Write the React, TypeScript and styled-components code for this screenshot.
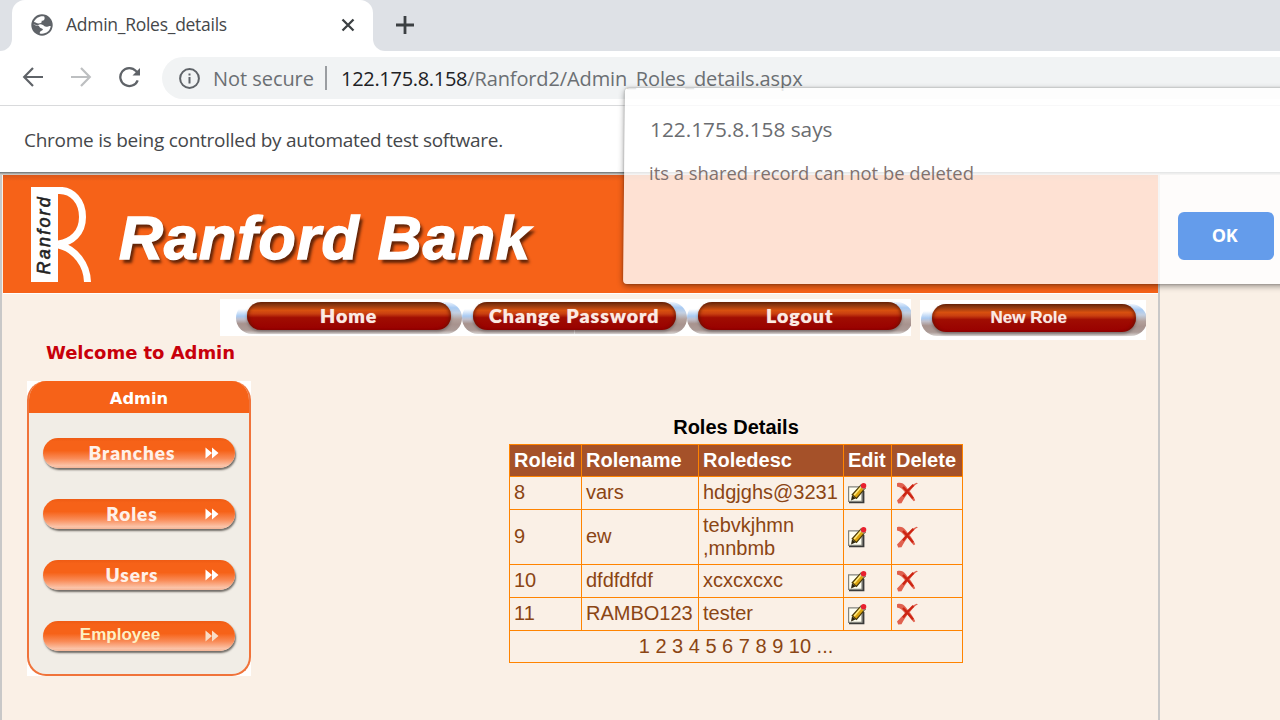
import React from "react";
import styled, { createGlobalStyle } from "styled-components";

const Global = createGlobalStyle`
  * { box-sizing: border-box; }
  html, body { margin: 0; padding: 0; height: 720px; overflow: hidden; background: #faf0e6; }
`;

const ui = `"Open Sans", "Noto Sans", sans-serif`;
const arial = `"Liberation Sans", Arial, sans-serif`;

const Window = styled.div`
  position: relative;
  width: 1280px;
  height: 720px;
  overflow: hidden;
  display: flex;
  flex-direction: column;
  background: #faf0e6;
  font-family: ${ui};
`;

const Text = styled.span<{ $size: number; $track?: number; $color?: string }>`
  font-family: ${ui};
  font-size: ${(p) => p.$size}px;
  letter-spacing: ${(p) => p.$track ?? 0}px;
  color: ${(p) => p.$color ?? "#45474a"};
  white-space: nowrap;
`;

/* browser frame */
const TabStrip = styled.div`
  height: 51px;
  flex: none;
  display: flex;
  background: #dee1e6;
`;
const TabFoot = styled.div<{ $side: "left" | "right" }>`
  width: ${(p) => (p.$side === "left" ? 12 : 14)}px;
  background: #fff;
  &::after {
    content: "";
    display: block;
    height: 51px;
    background: #dee1e6;
    border-radius: ${(p) => (p.$side === "left" ? "0 0 12px 0" : "0 0 0 12px")};
  }
`;
const Tab = styled.div`
  width: 361px;
  height: 51px;
  display: flex;
  align-items: center;
  padding: 0 18px 1px 19px;
  background: #fff;
  border-radius: 13px 13px 0 0;
`;
const TabTitle = styled.div`
  flex: 1;
  padding-left: 13px;
  line-height: 22px;
  padding-bottom: 2px;
`;
const NewTab = styled.div`
  padding: 15px 0 0 8px;
  svg { display: block; }
`;
const Toolbar = styled.div`
  height: 55px;
  flex: none;
  display: flex;
  align-items: flex-start;
  background: #fff;
  border-bottom: 1px solid #d9dadc;
  padding: 6px 0 0 22px;
`;
const NavIcons = styled.div`
  display: flex;
  gap: 26px;
  padding-top: 9px;
  width: 140px;
  svg { display: block; flex: none; }
`;
const Omnibox = styled.div`
  flex: 1;
  height: 42px;
  display: flex;
  align-items: center;
  background: #f1f3f4;
  border-radius: 21px 0 0 21px;
  padding-left: 17px;
`;
const NotSecure = styled.div`
  width: 113px;
  padding-left: 13px;
  white-space: nowrap;
`;
const Divider = styled.div`
  width: 2px;
  height: 24px;
  margin: 0 14px 1px 12px;
  background: #9a9da1;
`;
const InfoBar = styled.div`
  height: 66px;
  flex: none;
  display: flex;
  align-items: center;
  padding: 2px 0 0 24px;
  background: #fff;
`;

/* web page */
const Page = styled.div`
  flex: 1;
  width: 1160px;
  display: flex;
  flex-direction: column;
  border: 2px solid #c8c8c8;
  border-top: 0;
  border-bottom: 0;
`;
const PageShade = styled.div`
  flex: none;
  height: 3px;
  width: 1280px;
  background: linear-gradient(#7d8182 0 1px, #a5a5a2 1px 2px, #c9c4bf 2px 3px);
`;
const Banner = styled.div`
  flex: none;
  height: 119px;
  margin-left: 1px;
  display: flex;
  align-items: flex-start;
  padding: 12px 0 0 28px;
  background: linear-gradient(#d9571a 0, #f66218 6px, #f66218 100%);
  border-bottom: 1px solid #fff;
`;
const Logo = styled.div`
  width: 64px;
  height: 95px;
  display: flex;
`;
const LogoWord = styled.div`
  width: 27px;
  height: 95px;
  background: #fff;
  display: flex;
  align-items: center;
  justify-content: center;
  span {
    writing-mode: vertical-rl;
    transform: rotate(180deg);
    font: italic 400 18px/27px ${arial};
    letter-spacing: 2.2px;
    -webkit-text-stroke: 0.6px #222;
    color: #222;
  }
`;
const BankName = styled.div`
  margin: 16px 0 0 24px;
  font: italic 700 61px/70px ${arial};
  letter-spacing: 1px;
  color: #fff;
  -webkit-text-stroke: 1.5px #fff;
  text-shadow: 3px 4px 3px rgba(70, 25, 5, 0.85);
  white-space: nowrap;
`;

const MenuRow = styled.div`
  flex: none;
  display: flex;
  align-items: flex-start;
  gap: 9px;
  padding: 5px 0 0 218px;
  height: 47px;
`;
const MenuStrip = styled.div<{ $alone?: boolean }>`
  display: flex;
  width: ${(p) => (p.$alone ? 226 : 691)}px;
  height: ${(p) => (p.$alone ? 40 : 37)}px;
  margin-top: ${(p) => (p.$alone ? 1 : 0)}px;
  padding: ${(p) => (p.$alone ? "4px 0 0 1px" : "3px 0 0 16px")};
  background: #fff;
  overflow: hidden;
`;
const MenuShell = styled.div`
  flex: none;
  width: 225.5px;
  height: 32px;
  padding: 0 11px;
  border-radius: 16px;
  background:
    linear-gradient(#fff 0, #fff 22%, #a9cbf3 44%, #c0c0cc 54%, #a8938e 68%, #ab9b97 88%, #dcd8d6 100%) left / 50% 100% no-repeat,
    linear-gradient(#eef4fd 0, #a9cbf3 18%, #c3d0e2 34%, #b3a19c 54%, #a8938e 70%, #ab9b97 88%, #dcd8d6 100%) right / 50% 100% no-repeat;
`;
const MenuPill = styled.div<{ $size: number; $track: number; $sans?: boolean }>`
  height: 28px;
  border-radius: 14px;
  padding-right: ${(p) => (p.$sans ? 10 : 0)}px;
  background: linear-gradient(#6b2508 0, #8f3810 12%, #d8500f 30%, #c93f10 42%, #a00d02 56%, #980000 100%);
  box-shadow: inset 3px 0 3px -1px rgba(90, 20, 0, 0.55), inset -3px 0 3px -1px rgba(90, 20, 0, 0.55), 0 2px 3px rgba(90, 80, 80, 0.6);
  text-align: center;
  font-family: ${(p) => (p.$sans ? arial : `Lato, ${arial}`)};
  font-weight: ${(p) => (p.$sans ? 700 : 800)};
  font-size: ${(p) => p.$size}px;
  line-height: 28px;
  letter-spacing: ${(p) => p.$track}px;
  color: #fbeae4;
  white-space: nowrap;
  text-shadow: 0 0 1px rgba(255, 255, 255, 0.5);
`;

const Columns = styled.div`
  flex: 1;
  display: flex;
`;
const Side = styled.div`
  width: 507px;
  padding-left: 25px;
`;
const Welcome = styled.div`
  padding-left: 19px;
  height: 40px;
  font: 700 18px/24px "DejaVu Sans", sans-serif;
  letter-spacing: -0.04px;
  color: #c8000b;
  white-space: nowrap;
`;
const SideBox = styled.div`
  width: 224px;
  height: 295px;
  background: #fff;
`;
const SidePanel = styled.div`
  height: 295px;
  border-radius: 19px;
  border: 2px solid #f0733a;
  border-top: 0;
  background: #f1ede6;
  overflow: hidden;
`;
const SideTitle = styled.div`
  margin: 0 -2px 25px;
  height: 32px;
  background: #f66218;
  color: #fff;
  text-align: center;
  font: 700 16.3px/35px "DejaVu Sans", sans-serif;
`;
const SideButton = styled.div<{ $plain?: boolean }>`
  width: 192px;
  height: 30px;
  margin: 0 0 31px 14px;
  padding-right: 16px;
  display: flex;
  align-items: center;
  border-radius: 15px;
  background: linear-gradient(#ee5b14 0, #f66218 12%, #f66218 42%, #f98b57 68%, #fbc3a8 92%, #f3b496 100%);
  box-shadow: 1px 2px 2px rgba(80, 75, 70, 0.8);
  span {
    flex: 1;
    text-align: center;
    padding-left: ${(p) => (p.$plain ? 0 : 16)}px;
    padding-right: ${(p) => (p.$plain ? 8 : 0)}px;
    font: ${(p) => (p.$plain ? `700 17px/26px ${arial}` : `800 19px/28px Lato, ${arial}`)};
    padding-bottom: ${(p) => (p.$plain ? 3 : 1)}px;
    letter-spacing: ${(p) => (p.$plain ? 0 : 0.95)}px;
    color: ${(p) => (p.$plain ? "#fdf0c4" : "#fff0e8")};
  }
`;

const Roles = styled.div`
  width: 454px;
  padding-top: 75px;
`;
const Caption = styled.div`
  height: 28px;
  text-align: center;
  font: 700 20px/23px ${arial};
  color: #000;
`;
const Table = styled.table`
  width: 454px;
  table-layout: fixed;
  border-collapse: collapse;
  font: 20px/23px ${arial};
  color: #8b4513;
`;
const Row = styled.tr<{ $h: number }>`
  height: ${(p) => p.$h}px;
`;
const Cell = styled.td<{ $low?: boolean }>`
  border: 1px solid #ff8400;
  padding: 0 0 ${(p) => (p.$low ? 0 : 2)}px 4px;
  white-space: nowrap;
  vertical-align: middle;
  svg { display: block; }
`;
const Head = styled(Cell).attrs({ as: "th" })`
  background: #a55129;
  color: #fff;
  text-align: left;
  padding-bottom: 0;
`;
const Pager = styled(Cell)`
  text-align: center;
  padding: 0;
`;

/* alert floating above the page */
const Alert = styled.div`
  position: absolute;
  left: 624px;
  top: 88px;
  width: 670px;
  height: 196px;
  padding: 28px 20px 0 26px;
  display: flex;
  flex-direction: column;
  &::before {
    content: "";
    position: absolute;
    inset: 0;
    z-index: -1;
    border-radius: 4px;
    transform: skewX(-0.55deg);
    background: rgba(255, 255, 255, 0.81);
    box-shadow: 0 2px 6px rgba(0, 0, 0, 0.42), 0 0 2px rgba(0, 0, 0, 0.3);
  }
  z-index: 1;
`;
const AlertTitle = styled.div`
  height: 43px;
  line-height: 27px;
`;
const AlertMessage = styled.div`
  height: 53px;
  margin-left: -1px;
  line-height: 27px;
`;
const OkButton = styled.div`
  align-self: flex-end;
  width: 96px;
  height: 48px;
  border-radius: 6px;
  background: #649ceb;
  color: #fff;
  text-align: center;
  font: 700 18px/47px ${ui};
  letter-spacing: -0.5px;
  padding-right: 3px;
`;

const Globe = () => (
  <svg width="22" height="22" viewBox="0 0 22 22">
    <circle cx="11" cy="11" r="10.7" fill="#5f6368" />
    <path d="M13.200 2.400C9 1.500 4.500 4 2.900 8 4.500 8.300 5.500 9.500 7.300 9.600 10 9.600 11.200 8.600 10.600 6.800 13.500 6.500 14.200 4.500 13.200 2.400zM2.200 10.500C4.500 10.800 8 11 8.500 13 9 14.500 11.500 14 12 15.500 11 17 8.500 17 8.800 19.400 14 20.700 19.400 17.200 19.700 12 17 12 15.500 13.500 13.500 12.300 12.500 11.300 11.500 10.200 9 10.300L6 11.500C4.500 11.500 3 10.800 2.200 10.500z" fill="#fff" />
  </svg>
);
const Chevrons = ({ color }: { color: string }) => (
  <svg width="14" height="12" viewBox="0 0 14 12">
    <path d="M0.500 0.500 7 6l-6.500 5.500zM7 0.500 13.500 6 7 11.500z" fill={color} />
  </svg>
);
const EditIcon = () => (
  <svg width="20" height="21" viewBox="0 0 20 21">
    <path d="M15.300 8v11.200H1" fill="none" stroke="#3a3a3a" strokeWidth="2.200" />
    <path d="M0.600 3.800h13.400v14.500H0.600z" fill="#fffff2" stroke="#82837c" strokeWidth="1.200" />
    <path d="M3 17.500 4 12.500 8 15.200z" fill="#2b230d" />
    <path d="M13 2 17 5.300 8.500 15.400 4.200 11.800z" fill="#dba40f" stroke="#4a3a0a" strokeWidth="1.200" />
    <path d="M13.200 3.800 6.200 12" stroke="#ffec84" strokeWidth="1.400" />
    <path d="m12.300 2.800 4.400 3.600" stroke="#a9aaa4" strokeWidth="1.600" />
    <circle cx="15.600" cy="2.700" r="2.700" fill="#e8202e" />
  </svg>
);
const DeleteIcon = () => (
  <svg width="23" height="22" viewBox="0 0 23 22">
    <path d="M1 1.200C4 .2 7.500.8 9.800 4.300L12 7.200C14.500 4.500 17 2 20.500.8l1.500.4C18.500 3 16 6 13.800 9.200c1.800 2.800 4 5.600 5.400 9l-1.400 1C15.500 17 13.500 14 11.500 11.800 9.500 14.500 7.500 17.500 5.500 21.200L2.200 21.600 1 18.500c2.500-3 5.500-5.500 8-8.300C6.800 7.200 4.500 5.200 1 4.500z" fill="#e0614f" />
    <path d="M7 5l4 4.200C14 6.500 15.500 4.500 17.500 3M11 9.200l6 7.200M11 9.500 7 14.500" fill="none" stroke="#cc2412" strokeWidth="2.200" />
  </svg>
);

const records = [
  { id: "8", name: "vars", desc: ["hdgjghs@3231"], h: 33 },
  { id: "9", name: "ew", desc: ["tebvkjhmn", ",mnbmb"], h: 55 },
  { id: "10", name: "dfdfdfdf", desc: ["xcxcxcxc"], h: 33 },
  { id: "11", name: "RAMBO123", desc: ["tester"], h: 33 },
];

export default function App() {
  return (
    <Window>
      <Global />
      <TabStrip>
        <TabFoot $side="left" />
        <Tab>
          <Globe />
          <TabTitle><Text $size={17.5} $track={-0.27}>Admin_Roles_details</Text></TabTitle>
          <svg width="14" height="14" viewBox="0 0 14 14">
            <path d="M1.500 1.500l11 11M12.500 1.500l-11 11" stroke="#3c4043" strokeWidth="2.300" />
          </svg>
        </Tab>
        <TabFoot $side="right" />
        <NewTab>
          <svg width="20" height="20" viewBox="0 0 20 20">
            <path d="M10 1v18M1 10h18" stroke="#3c4043" strokeWidth="2.800" />
          </svg>
        </NewTab>
      </TabStrip>
      <Toolbar>
        <NavIcons>
          <svg width="22" height="22" viewBox="0 0 22 22" fill="none" stroke="#5f6368" strokeWidth="2.200">
            <path d="M21 11H2.500M11 2 2.200 11l8.800 9" />
          </svg>
          <svg width="22" height="22" viewBox="0 0 22 22" fill="none" stroke="#bdbfc1" strokeWidth="2.200">
            <path d="M1 11h18.500M11 2l8.800 9-8.800 9" />
          </svg>
          <svg width="22" height="22" viewBox="0 0 22 22" fill="none" stroke="#5f6368" strokeWidth="2.300">
            <path d="M19.700 14.300A9 9 0 1 1 18 5l1 1" />
            <path d="M22 2v7.500h-7.500z" fill="#5f6368" stroke="none" />
          </svg>
        </NavIcons>
        <Omnibox>
          <svg width="21" height="21" viewBox="0 0 21 21">
            <circle cx="10.500" cy="10.500" r="9.400" fill="none" stroke="#5f6368" strokeWidth="2" />
            <path d="M10.500 9v6.500M10.500 5.500v2" stroke="#5f6368" strokeWidth="2" />
          </svg>
          <NotSecure><Text $size={20} $color="#6b6f73" $track={-0.05}>Not secure</Text></NotSecure>
          <Divider />
          <Text $size={20} $track={-0.12} $color="#6b6f73"><Text $size={20} $track={-0.3} $color="#202124">122.175.8.158</Text>/Ranford2/Admin_Roles_details.aspx</Text>
        </Omnibox>
      </Toolbar>
      <InfoBar><Text $size={19} $track={-0.26}>Chrome is being controlled by automated test software.</Text></InfoBar>
      <PageShade />
      <Page>
        <Banner>
          <Logo>
            <LogoWord><span>Ranford</span></LogoWord>
            <svg width="36" height="95" viewBox="0 0 36 95" fill="none" stroke="#fff" strokeWidth="7">
              <path d="M-1 3.500C15 2 24.500 15 24.500 30 24.500 46 14 55 0 57M0 58C18 62 29 78 29.500 95" />
            </svg>
          </Logo>
          <BankName>Ranford Bank</BankName>
        </Banner>
        <MenuRow>
          <MenuStrip>
            {["Home", "Change Password", "Logout"].map((label) => (
              <MenuShell key={label}><MenuPill $size={19.5} $track={1}>{label}</MenuPill></MenuShell>
            ))}
          </MenuStrip>
          <MenuStrip $alone>
            <MenuShell><MenuPill $size={17} $track={0} $sans>New Role</MenuPill></MenuShell>
          </MenuStrip>
        </MenuRow>
        <Columns>
          <Side>
            <Welcome>Welcome to Admin</Welcome>
            <SideBox>
              <SidePanel>
                <SideTitle>Admin</SideTitle>
                {["Branches", "Roles", "Users", "Employee"].map((label) => (
                  <SideButton key={label} $plain={label === "Employee"}>
                    <span>{label}</span>
                    <Chevrons color={label === "Employee" ? "#f9dcc5" : "#fff"} />
                  </SideButton>
                ))}
              </SidePanel>
            </SideBox>
          </Side>
          <Roles>
            <Caption>Roles Details</Caption>
            <Table>
              <colgroup>
                <col width="72" /><col width="117" /><col width="145" /><col width="48" /><col width="71" />
              </colgroup>
              <tbody>
                <Row $h={32}>
                  {["Roleid", "Rolename", "Roledesc", "Edit", "Delete"].map((h) => <Head key={h}>{h}</Head>)}
                </Row>
                {records.map((r) => (
                  <Row key={r.id} $h={r.h}>
                    <Cell>{r.id}</Cell>
                    <Cell>{r.name}</Cell>
                    <Cell $low={r.desc.length > 1}>{r.desc.map((d) => <div key={d}>{d}</div>)}</Cell>
                    <Cell $low><EditIcon /></Cell>
                    <Cell $low><DeleteIcon /></Cell>
                  </Row>
                ))}
                <Row $h={32}><Pager colSpan={5}>1 2 3 4 5 6 7 8 9 10 ...</Pager></Row>
              </tbody>
            </Table>
          </Roles>
        </Columns>
      </Page>
      <Alert>
        <AlertTitle><Text $size={20.8} $color="#6a6c70">122.175.8.158 says</Text></AlertTitle>
        <AlertMessage><Text $size={18.4} $color="#80716e">its a shared record can not be deleted</Text></AlertMessage>
        <OkButton>OK</OkButton>
      </Alert>
    </Window>
  );
}
